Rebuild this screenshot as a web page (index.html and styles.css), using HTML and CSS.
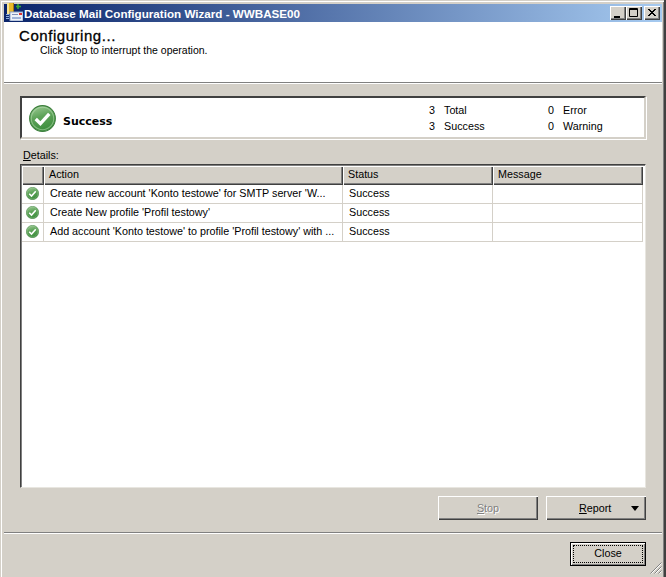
FILE: index.html
```html
<!DOCTYPE html>
<html lang="en">
<head>
<meta charset="utf-8">
<title>Database Mail Configuration Wizard - WWBASE00</title>
<link rel="stylesheet" href="styles.css">
</head>
<body>
<svg width="0" height="0" class="defs">
  <defs>
    <linearGradient id="okfill" x1="0" y1="0" x2="0.3" y2="1">
      <stop offset="0" stop-color="#a5cf9c"/>
      <stop offset="0.5" stop-color="#5fa45a"/>
      <stop offset="1" stop-color="#3f8f3f"/>
    </linearGradient>
    <symbol id="ok" viewBox="0 0 26 26">
      <circle cx="13" cy="13" r="12.4" fill="url(#okfill)" stroke="#3d7f3d" stroke-width="1"/>
      <circle cx="13" cy="13" r="10.8" fill="none" stroke="#b6dcb0" stroke-opacity=".55" stroke-width="1"/>
      <path d="M6.5 13.5 L11 18 L19.5 8.5" fill="none" stroke="#fff" stroke-width="3.2"/>
    </symbol>
  </defs>
</svg>
<div class="window">
  <header class="titlebar">
    <svg class="appicon" width="17" height="18" viewBox="0 0 17 18">
      <rect x="1" y="0" width="7" height="11" fill="#e8b92c"/>
      <rect x="1" y="0" width="2" height="11" fill="#f7e394"/>
      <rect x="7" y="0" width="1" height="11" fill="#a67c12"/>
      <path d="M12 1v5M10 3.500h5" stroke="#35a935" stroke-width="1.600" fill="none"/>
      <rect x="4" y="9" width="13" height="9" fill="#eef2f8" stroke="#8aa0c8"/>
      <rect x="6" y="11" width="6" height="1" fill="#7f8fb8"/>
      <rect x="6" y="14" width="9" height="2" fill="#9fb3d9"/>
      <rect x="13" y="10" width="3" height="2" fill="#d33"/>
      <rect x="0" y="11" width="3" height="1" fill="#8fb0e0"/>
      <rect x="0" y="13" width="3" height="1" fill="#8fb0e0"/>
      <rect x="0" y="15" width="3" height="1" fill="#8fb0e0"/>
    </svg>
    <span class="title">Database Mail Configuration Wizard - WWBASE00</span>
    <div class="caption">
      <span class="capbtn"><svg width="16" height="14" viewBox="0 0 16 14"><rect x="4" y="10" width="6" height="2" fill="#000"/></svg></span>
      <span class="capbtn"><svg width="16" height="14" viewBox="0 0 16 14"><path d="M3.500 2.500h8v8h-8z M3 3.500h9" fill="none" stroke="#000"/></svg></span>
      <span class="capbtn closebtn"><svg width="16" height="14" viewBox="0 0 16 14"><path d="M4 3l7 7M5 3l7 7M11 3l-7 7M12 3l-7 7" fill="none" stroke="#000"/></svg></span>
    </div>
  </header>

  <section class="banner">
    <h1 class="banner-title">Configuring...</h1>
    <p class="banner-sub">Click Stop to interrupt the operation.</p>
  </section>

  <main class="content">
    <div class="summary">
      <svg class="bigok" width="27" height="27"><use href="#ok"/></svg>
      <strong class="summary-label">Success</strong>
      <dl class="counts">
        <dt>3</dt><dd>Total</dd><dt>0</dt><dd>Error</dd>
        <dt>3</dt><dd>Success</dd><dt>0</dt><dd>Warning</dd>
      </dl>
    </div>

    <div class="details-label"><u>D</u>etails:</div>

    <div class="grid">
      <div class="grid-head">
        <div class="hcell"></div>
        <div class="hcell">Action</div>
        <div class="hcell">Status</div>
        <div class="hcell">Message</div>
      </div>
      <div class="grid-row">
        <div class="cell cell-icon"><svg width="13" height="13"><use href="#ok"/></svg></div>
        <div class="cell">Create new account 'Konto testowe' for SMTP server 'W...</div>
        <div class="cell">Success</div>
        <div class="cell"></div>
      </div>
      <div class="grid-row">
        <div class="cell cell-icon"><svg width="13" height="13"><use href="#ok"/></svg></div>
        <div class="cell">Create New profile 'Profil testowy'</div>
        <div class="cell">Success</div>
        <div class="cell"></div>
      </div>
      <div class="grid-row">
        <div class="cell cell-icon"><svg width="13" height="13"><use href="#ok"/></svg></div>
        <div class="cell">Add account 'Konto testowe' to profile 'Profil testowy' with ...</div>
        <div class="cell">Success</div>
        <div class="cell"></div>
      </div>
    </div>

    <div class="actions">
      <button class="btn btn-wide" disabled><u>S</u>top</button>
      <button class="btn btn-wide btn-report"><span><u>R</u>eport</span><i class="arrow"></i></button>
    </div>
  </main>

  <footer class="footer">
    <button class="btn btn-close"><span class="focus">Close</span></button>
    <svg class="grip" width="13" height="13" viewBox="0 0 13 13">
      <path d="M12.500 1.500L1.500 12.500M12.500 5.500L5.500 12.500M12.500 9.500L9.500 12.500" stroke="#808080" fill="none"/>
      <path d="M12.500 2.500L2.500 12.500M12.500 6.500L6.500 12.500M12.500 10.500L10.500 12.500" stroke="#fff" fill="none"/>
    </svg>
  </footer>
</div>
</body>
</html>
```

FILE: styles.css
```css
* { box-sizing: border-box; }
html, body { margin: 0; padding: 0; height: 100%; overflow: hidden; }
body {
  font-family: "Liberation Sans", Arial, sans-serif;
  font-size: 10.75px;
  color: #000;
  background: #d4d0c8;
}
.defs { position: absolute; }
.window {
  width: 666px;
  height: 577px;
  display: flex;
  flex-direction: column;
  background: #d4d0c8;
  padding: 4px 2px 0 4px;
  border-right: 2px solid #404040;
  box-shadow: inset 1px 1px 0 #d4d0c8, inset 2px 2px 0 #fff, inset -1px 0 0 #808080;
}
.titlebar {
  height: 18px;
  display: flex;
  align-items: center;
  background: linear-gradient(90deg, #0a246a, #a6caf0);
  padding-left: 2px;
}
.appicon { flex: none; margin-top: -2px; }
.title {
  margin-left: 1px;
  color: #fff;
  font-weight: bold;
  font-size: 11.65px;
  flex: 1;
  white-space: nowrap;
}
.caption { display: flex; padding-right: 2px; }
.capbtn {
  width: 16px;
  height: 14px;
  display: block;
  background: #d4d0c8;
  box-shadow: inset 1px 1px 0 #fff, inset -1px -1px 0 #404040, inset -2px -2px 0 #808080;
}
.capbtn svg { display: block; }
.closebtn { margin-left: 2px; }
.banner {
  height: 61px;
  background: #fff;
  border-bottom: 1px solid #808080;
  flex: none;
  box-shadow: 0 1px 0 #fff;
}
.banner-title {
  margin: 0;
  padding: 5px 0 0 15px;
  font-size: 15px;
  line-height: 17px;
  font-weight: normal;
  -webkit-text-stroke: 0.3px #000;
  letter-spacing: 0.55px;
}
.banner-sub {
  margin: 0;
  padding: 0 0 0 36px;
  line-height: 13px;
  font-size: 10.5px;
}
.content {
  flex: 1;
  padding: 13px 16px 0 16px;
  display: flex;
  flex-direction: column;
}
.summary {
  height: 43px;
  flex: none;
  display: flex;
  align-items: center;
  background: #fff;
  border: 2px solid;
  border-color: #404040 #d4d0c8 #d4d0c8 #404040;
  box-shadow: 1px 1px 0 #fff;
  padding-left: 7px;
}
.bigok { flex: none; margin-top: 2px; }
.summary-label { margin: 7px 0 0 7px; font-size: 11px; font-family: "DejaVu Sans", sans-serif; width: 366px; flex: none; }
.counts {
  margin: 1px 0 0 0;
  display: grid;
  grid-template-columns: 15px 104px 15px 1fr;
  row-gap: 3px;
  line-height: 13px;
}
.counts dt { font-weight: normal; }
.counts dd { margin: 0; }
.details-label { margin: 10px 0 2px 3px; line-height: 13px; height: 13px; flex: none; }
.grid {
  height: 324px;
  flex: none;
  background: #fff;
  border: 1px solid;
  border-color: #404040 #e8e6e0 #e8e6e0 #404040;
  box-shadow: inset 1px 1px 0 #808080;
  padding: 1px 0 0 1px;
}
.grid-head, .grid-row {
  display: grid;
  grid-template-columns: 22px 299px 150px 150px;
}
.grid-head { height: 19px; }
.hcell {
  background: #d4d0c8;
  line-height: 17px;
  padding-left: 5px;
  box-shadow: inset 1px 1px 0 #fff, inset -1px -1px 0 #404040, inset -2px -2px 0 #808080;
}
.grid-row { height: 19px; }
.cell {
  line-height: 16px;
  padding-left: 6px;
  border-right: 1px solid #d4d0c8;
  border-bottom: 1px solid #d4d0c8;
  white-space: nowrap;
  overflow: hidden;
}
.cell-icon { padding: 2px 0 0 4px; }
.cell-icon svg { display: block; }
.actions {
  display: flex;
  justify-content: flex-end;
  gap: 8px;
  margin-top: 8px;
}
.btn {
  font: inherit;
  color: #000;
  background: #d4d0c8;
  border: 0;
  padding: 0;
  box-shadow: inset 1px 1px 0 #fff, inset -1px -1px 0 #404040, inset -2px -2px 0 #808080;
}
.btn-wide { width: 100px; height: 24px; }
.btn[disabled] { color: #808080; text-shadow: 1px 1px 0 #fff; }
.btn-report { display: flex; align-items: center; padding-left: 33px; }
.arrow {
  margin-left: 20px;
  width: 0;
  height: 0;
  border: 4px solid transparent;
  border-top: 5px solid #000;
  border-bottom: 0;
}
.footer {
  position: relative;
  flex: none;
  height: 45px;
  border-top: 1px solid #808080;
  box-shadow: inset 0 1px 0 #fff;
  padding: 9px 16px 0 0;
  display: flex;
  justify-content: flex-end;
}
.btn-close {
  width: 76px;
  height: 24px;
  box-shadow: inset 0 0 0 1px #000, inset 1px 1px 0 1px #fff, inset -1px -1px 0 1px #808080;
  padding: 4px;
}
.focus {
  display: block;
  height: 100%;
  outline: 1px dotted #000;
  line-height: 15px;
}
.grip { position: absolute; right: 0; bottom: 3px; }
```
